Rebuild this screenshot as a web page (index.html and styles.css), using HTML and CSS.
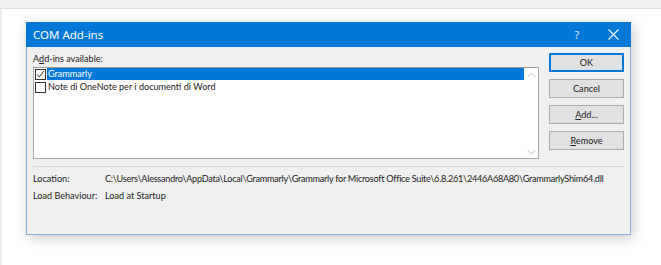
FILE: index.html
```html
<!DOCTYPE html>
<html>
<head>
<meta charset="utf-8">
<link rel="stylesheet" href="styles.css">
</head>
<body>
<div class="topband"></div>
<div class="stage">
  <div class="dialog">
    <div class="titlebar">
      <span class="title">COM Add-ins</span>
      <span class="tb-help">?</span>
      <span class="tb-close"><svg width="11" height="11" viewBox="0 0 11 11"><path d="M0.5 0.5L10.5 10.5M10.5 0.5L0.5 10.5" stroke="#fff" stroke-width="1.1" fill="none"/></svg></span>
    </div>
    <div class="body">
      <div class="main">
        <div class="left">
          <div class="label">A<u>d</u>d-ins available:</div>
          <div class="listbox">
            <div class="items">
              <div class="item selected">
                <span class="check"><svg width="11" height="11" viewBox="0 0 11 11"><path d="M1.5 5.5L4 8.5L9.5 1.5" stroke="#333" stroke-width="1.2" fill="none"/></svg></span>
                <span class="itext">Grammarly</span>
              </div>
              <div class="item">
                <span class="check"></span>
                <span class="itext">Note di OneNote per i documenti di Word</span>
              </div>
            </div>
            <div class="scrollbar">
              <svg width="9" height="6" viewBox="0 0 9 6"><path d="M0.5 5L4.5 1L8.5 5" stroke="#c0c0c0" stroke-width="1" fill="none"/></svg>
              <svg width="9" height="6" viewBox="0 0 9 6"><path d="M0.5 1L4.5 5L8.5 1" stroke="#c0c0c0" stroke-width="1" fill="none"/></svg>
            </div>
          </div>
        </div>
        <div class="buttons">
          <div class="btn default">OK</div>
          <div class="btn">Cancel</div>
          <div class="btn"><u>A</u>dd...</div>
          <div class="btn"><u>R</u>emove</div>
        </div>
      </div>
      <div class="sep"></div>
      <div class="info">
        <div class="info-row"><span class="info-key">Location:</span><span class="info-val path">C:\Users\Alessandro\AppData\Local\Grammarly\Grammarly for Microsoft Office Suite\6.8.261\2446A68A80\GrammarlyShim64.dll</span></div>
        <div class="info-row"><span class="info-key">Load Behaviour:</span><span class="info-val">Load at Startup</span></div>
      </div>
    </div>
  </div>
</div>
</body>
</html>
```
FILE: styles.css
```css
html, body {
  margin: 0;
  padding: 0;
  background: #ffffff;
  width: 661px;
  height: 265px;
  overflow: hidden;
  font-family: "Lato", "Noto Sans", sans-serif;
  font-size: 9.1px;
  color: #222;
  white-space: nowrap;
}
.topband {
  height: 8px;
  background: #efefef;
  border-bottom: 1px solid #dcdcdc;
}
.stage {
  height: 256px;
  border-left: 2px solid #ececec;
  padding-left: 24px;
  padding-top: 13px;
  box-sizing: border-box;
}
.dialog {
  width: 605px;
  height: 213px;
  box-sizing: border-box;
  border: 1px solid #86b0dc;
  background: #f0f0f0;
  box-shadow: 2px 3px 12px rgba(0,0,0,0.22);
  display: flex;
  flex-direction: column;
}
.titlebar {
  height: 25px;
  margin: -1px -1px 0 -1px;
  background: #0078d7;
  display: flex;
  align-items: center;
  color: #fff;
  padding-left: 7px;
  font-family: "Noto Sans", sans-serif;
}
.title {
  flex: 1;
  font-size: 11.5px;
}
.tb-help {
  font-size: 11px;
  width: 36px;
  text-align: center;
  color: #dfe9f7;
}
.tb-close {
  width: 36px;
  display: flex;
  justify-content: center;
  align-items: center;
}
.body {
  padding: 6px 6px 0 6px;
}
.main {
  display: flex;
  gap: 10px;
}
.left {
  width: 506px;
}
.label {
  height: 14px;
  line-height: 14px;
  margin-top: -1px;
  margin-bottom: 1px;
}
.label u, .btn u {
  text-decoration: underline;
  text-underline-offset: 1px;
}
.listbox {
  height: 92px;
  box-sizing: border-box;
  border: 1px solid #a9a9a9;
  border-top-color: #9a9a9a;
  background: #fff;
  display: flex;
}
.items {
  flex: 1;
}
.item {
  height: 12px;
  display: flex;
  align-items: center;
  line-height: 12px;
}
.check {
  width: 11px;
  height: 11px;
  border: 1px solid #333;
  margin-left: 1px;
  margin-right: 1px;
  box-sizing: border-box;
  background: #fff;
  display: flex;
  align-items: center;
  justify-content: center;
}
.check svg { width: 9px; height: 9px; }
.itext {
  flex: 1;
  padding-left: 1px;
  height: 12px;
}
.item.selected .itext {
  background: #0078d7;
  color: #fff;
}
.item + .item { margin-top: 1px; }
.scrollbar {
  width: 14px;
  display: flex;
  flex-direction: column;
  justify-content: space-between;
  align-items: center;
  padding: 4px 0 3px;
}
.buttons {
  display: flex;
  flex-direction: column;
  gap: 7px;
  width: 75px;
}
.btn {
  height: 19px;
  box-sizing: border-box;
  border: 1px solid #adadad;
  background: #e1e1e1;
  text-align: center;
  line-height: 17px;
}
.btn.default {
  border: 2px solid #0078d7;
  line-height: 15px;
}
.sep {
  height: 1px;
  background: #dadada;
  margin-top: 7px;
}
.info {
  padding-top: 3px;
}
.info-row {
  display: flex;
  height: 17px;
  line-height: 17px;
}
.info-key {
  width: 72px;
  flex: none;
}
.path {
  letter-spacing: -0.25px;
}
```
